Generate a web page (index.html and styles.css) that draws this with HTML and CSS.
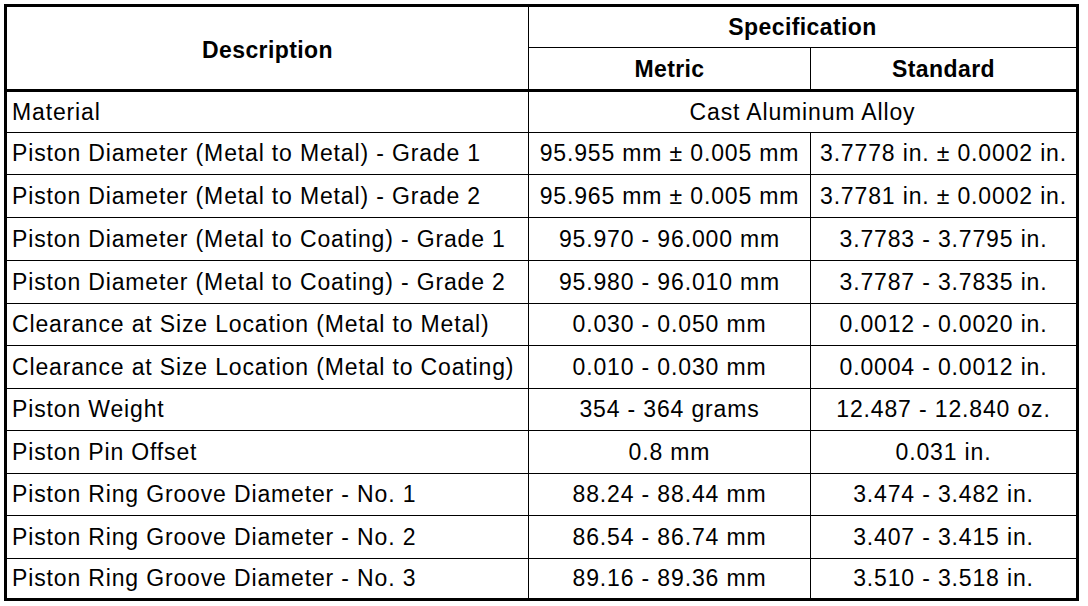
FILE: index.html
```html
<!DOCTYPE html>
<html lang="en">
<head>
<meta charset="utf-8">
<title>Piston Specifications</title>
<link rel="stylesheet" href="styles.css">
</head>
<body>
<div class="spec-table">
  <div class="cell head desc-head">Description</div>
  <div class="cell head spec-head">Specification</div>
  <div class="cell head sub-head">Metric</div>
  <div class="cell head sub-head">Standard</div>

  <div class="cell label">Material</div>
  <div class="cell value span2">Cast Aluminum Alloy</div>

  <div class="cell label">Piston Diameter (Metal to Metal) - Grade 1</div>
  <div class="cell value">95.955 mm ± 0.005 mm</div>
  <div class="cell value">3.7778 in. ± 0.0002 in.</div>

  <div class="cell label">Piston Diameter (Metal to Metal) - Grade 2</div>
  <div class="cell value">95.965 mm ± 0.005 mm</div>
  <div class="cell value">3.7781 in. ± 0.0002 in.</div>

  <div class="cell label">Piston Diameter (Metal to Coating) - Grade 1</div>
  <div class="cell value">95.970 - 96.000 mm</div>
  <div class="cell value">3.7783 - 3.7795 in.</div>

  <div class="cell label">Piston Diameter (Metal to Coating) - Grade 2</div>
  <div class="cell value">95.980 - 96.010 mm</div>
  <div class="cell value">3.7787 - 3.7835 in.</div>

  <div class="cell label">Clearance at Size Location (Metal to Metal)</div>
  <div class="cell value">0.030 - 0.050 mm</div>
  <div class="cell value">0.0012 - 0.0020 in.</div>

  <div class="cell label">Clearance at Size Location (Metal to Coating)</div>
  <div class="cell value">0.010 - 0.030 mm</div>
  <div class="cell value">0.0004 - 0.0012 in.</div>

  <div class="cell label">Piston Weight</div>
  <div class="cell value">354 - 364 grams</div>
  <div class="cell value">12.487 - 12.840 oz.</div>

  <div class="cell label">Piston Pin Offset</div>
  <div class="cell value">0.8 mm</div>
  <div class="cell value">0.031 in.</div>

  <div class="cell label">Piston Ring Groove Diameter - No. 1</div>
  <div class="cell value">88.24 - 88.44 mm</div>
  <div class="cell value">3.474 - 3.482 in.</div>

  <div class="cell label">Piston Ring Groove Diameter - No. 2</div>
  <div class="cell value">86.54 - 86.74 mm</div>
  <div class="cell value">3.407 - 3.415 in.</div>

  <div class="cell label">Piston Ring Groove Diameter - No. 3</div>
  <div class="cell value">89.16 - 89.36 mm</div>
  <div class="cell value">3.510 - 3.518 in.</div>
</div>
</body>
</html>
```

FILE: styles.css
```css
html, body {
  margin: 0;
  padding: 0;
  background: #ffffff;
}

body {
  padding: 4px;
  font-family: "Liberation Sans", Arial, Helvetica, sans-serif;
  color: #000000;
}

.spec-table {
  display: grid;
  width: 1075px;
  box-sizing: border-box;
  border: 3px solid #000000;
  background: #000000;
  gap: 1px;
  grid-template-columns: 521px 281px 265px;
  grid-template-rows: 40px 43px 40px 41px 42px 42px 42px 41px 42px 41px 42px 41px 42px 39px;
}

.cell {
  background: #ffffff;
  display: flex;
  align-items: center;
  font-size: 23px;
  letter-spacing: 0.85px;
  white-space: nowrap;
  overflow: hidden;
}

.head {
  font-weight: bold;
  justify-content: center;
  letter-spacing: 0.4px;
}

.desc-head {
  grid-row: 1 / span 2;
  border-bottom: 2px solid #000000;
  padding-top: 4px;
}

.spec-head {
  grid-column: 2 / span 2;
  padding-top: 1px;
}

.sub-head {
  border-bottom: 2px solid #000000;
  padding-top: 2px;
}

.label {
  padding-left: 5px;
}

.value {
  justify-content: center;
}

.span2 {
  grid-column: 2 / span 2;
}
```
